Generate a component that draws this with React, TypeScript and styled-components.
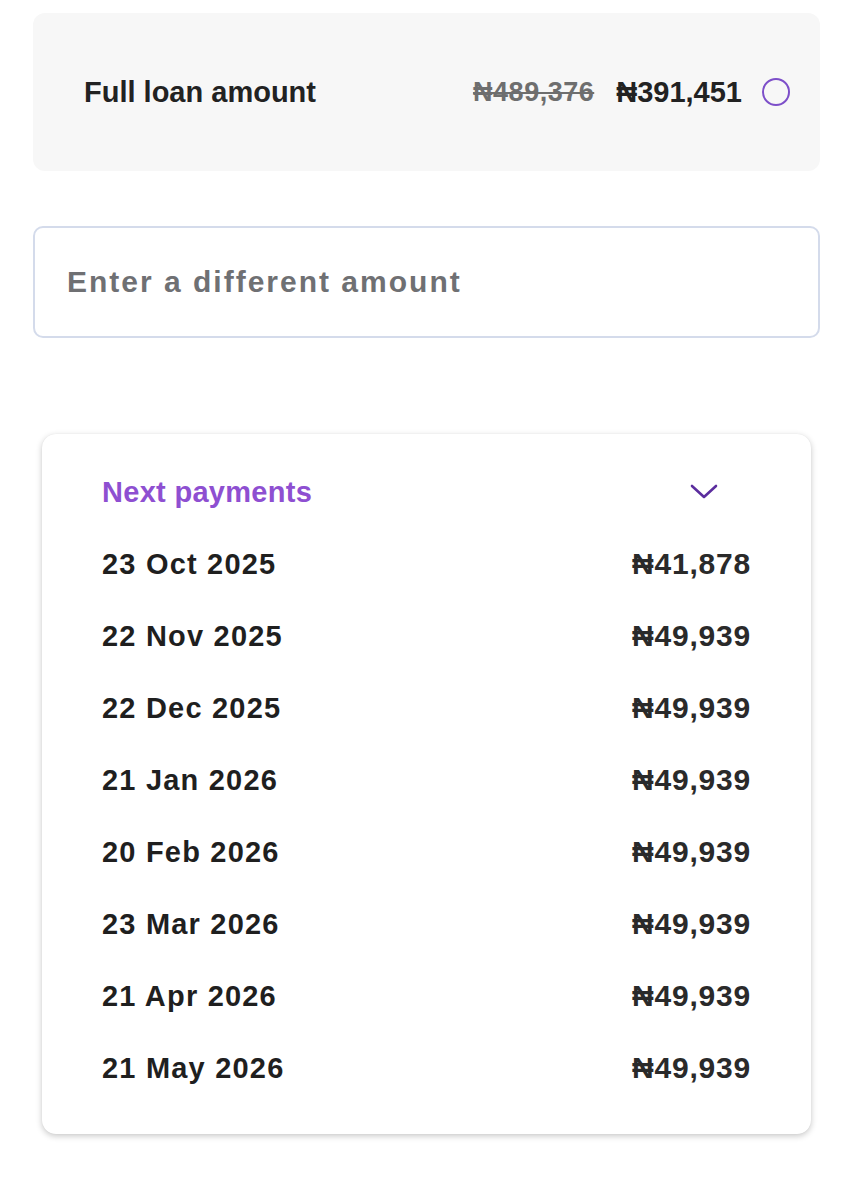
import React from "react";
import styled, { createGlobalStyle } from "styled-components";

const payments = [
  { date: "23 Oct 2025", amount: "₦41,878" },
  { date: "22 Nov 2025", amount: "₦49,939" },
  { date: "22 Dec 2025", amount: "₦49,939" },
  { date: "21 Jan 2026", amount: "₦49,939" },
  { date: "20 Feb 2026", amount: "₦49,939" },
  { date: "23 Mar 2026", amount: "₦49,939" },
  { date: "21 Apr 2026", amount: "₦49,939" },
  { date: "21 May 2026", amount: "₦49,939" },
];

const App: React.FC = () => {
  return (
    <>
      <GlobalStyle />
      <Page>
        <LoanOption>
          <OptionLabel>Full loan amount</OptionLabel>
          <Prices>
            <OldPrice>₦489,376</OldPrice>
            <NewPrice>₦391,451</NewPrice>
            <Radio />
          </Prices>
        </LoanOption>

        <AmountInput placeholder="Enter a different amount" />

        <PaymentsCard>
          <CardHeader>
            <HeaderTitle>Next payments</HeaderTitle>
            <Chevron viewBox="0 0 28 16" fill="none">
              <path
                d="M2 2 L14 13 L26 2"
                stroke="#5b2d9e"
                strokeWidth="2.6"
                strokeLinecap="round"
                strokeLinejoin="round"
              />
            </Chevron>
          </CardHeader>
          {payments.map((p) => (
            <PaymentRow key={p.date}>
              <DateText>{p.date}</DateText>
              <Amount>{p.amount}</Amount>
            </PaymentRow>
          ))}
        </PaymentsCard>
      </Page>
    </>
  );
};

const GlobalStyle = createGlobalStyle`
  * {
    box-sizing: border-box;
  }
  body {
    margin: 0;
    background: #ffffff;
    font-family: "Liberation Sans", Arial, sans-serif;
    color: #222222;
  }
`;

const Page = styled.main`
  display: flex;
  flex-direction: column;
  padding: 13px 33px 40px;
`;

const LoanOption = styled.div`
  display: flex;
  align-items: center;
  justify-content: space-between;
  height: 158px;
  padding: 0 30px 0 51px;
  border-radius: 12px;
  background-color: #f7f7f7;
`;

const OptionLabel = styled.span`
  font-size: 29px;
  font-weight: 700;
  color: #222222;
`;

const Prices = styled.div`
  display: flex;
  align-items: center;
`;

const OldPrice = styled.span`
  font-size: 27px;
  font-weight: 700;
  letter-spacing: 0.5px;
  color: #6e6e6e;
  text-decoration: line-through;
  text-decoration-thickness: 1.5px;
  margin-right: 22px;
`;

const NewPrice = styled.span`
  font-size: 29px;
  font-weight: 700;
  color: #222222;
  margin-right: 20px;
`;

const Radio = styled.span`
  width: 28px;
  height: 28px;
  border-radius: 50%;
  border: 2px solid #7d4fc9;
`;

const AmountInput = styled.input`
  margin-top: 55px;
  height: 112px;
  padding: 0 32px;
  border: 2px solid #d4dbeb;
  border-radius: 10px;
  background: #ffffff;
  font-family: "Liberation Sans", Arial, sans-serif;
  font-size: 30px;
  font-weight: 700;
  letter-spacing: 2px;
  color: #222222;
  outline: none;

  &::placeholder {
    color: #6f7073;
  }
`;

const PaymentsCard = styled.section`
  display: flex;
  flex-direction: column;
  margin: 96px 9px 0;
  padding: 22px 60px 30px;
  border-radius: 14px;
  background: #ffffff;
  box-shadow: 0 2px 6px rgba(0, 0, 0, 0.22), 0 0 1px rgba(0, 0, 0, 0.08);
`;

const CardHeader = styled.div`
  display: flex;
  align-items: center;
  justify-content: space-between;
  height: 72px;
`;

const HeaderTitle = styled.h2`
  margin: 0;
  font-size: 29px;
  font-weight: 700;
  letter-spacing: 0.3px;
  color: #8e4fd1;
`;

const Chevron = styled.svg`
  width: 28px;
  height: 16px;
  margin-right: 33px;
`;

const PaymentRow = styled.div`
  display: flex;
  align-items: center;
  justify-content: space-between;
  height: 72px;
  font-size: 29px;
  font-weight: 700;
  color: #1f1f1f;
`;

const DateText = styled.span`
  letter-spacing: 1.2px;
`;

const Amount = styled.span`
  font-size: 30px;
  letter-spacing: 0.8px;
  color: #2a2a2a;
`;

export default App;
